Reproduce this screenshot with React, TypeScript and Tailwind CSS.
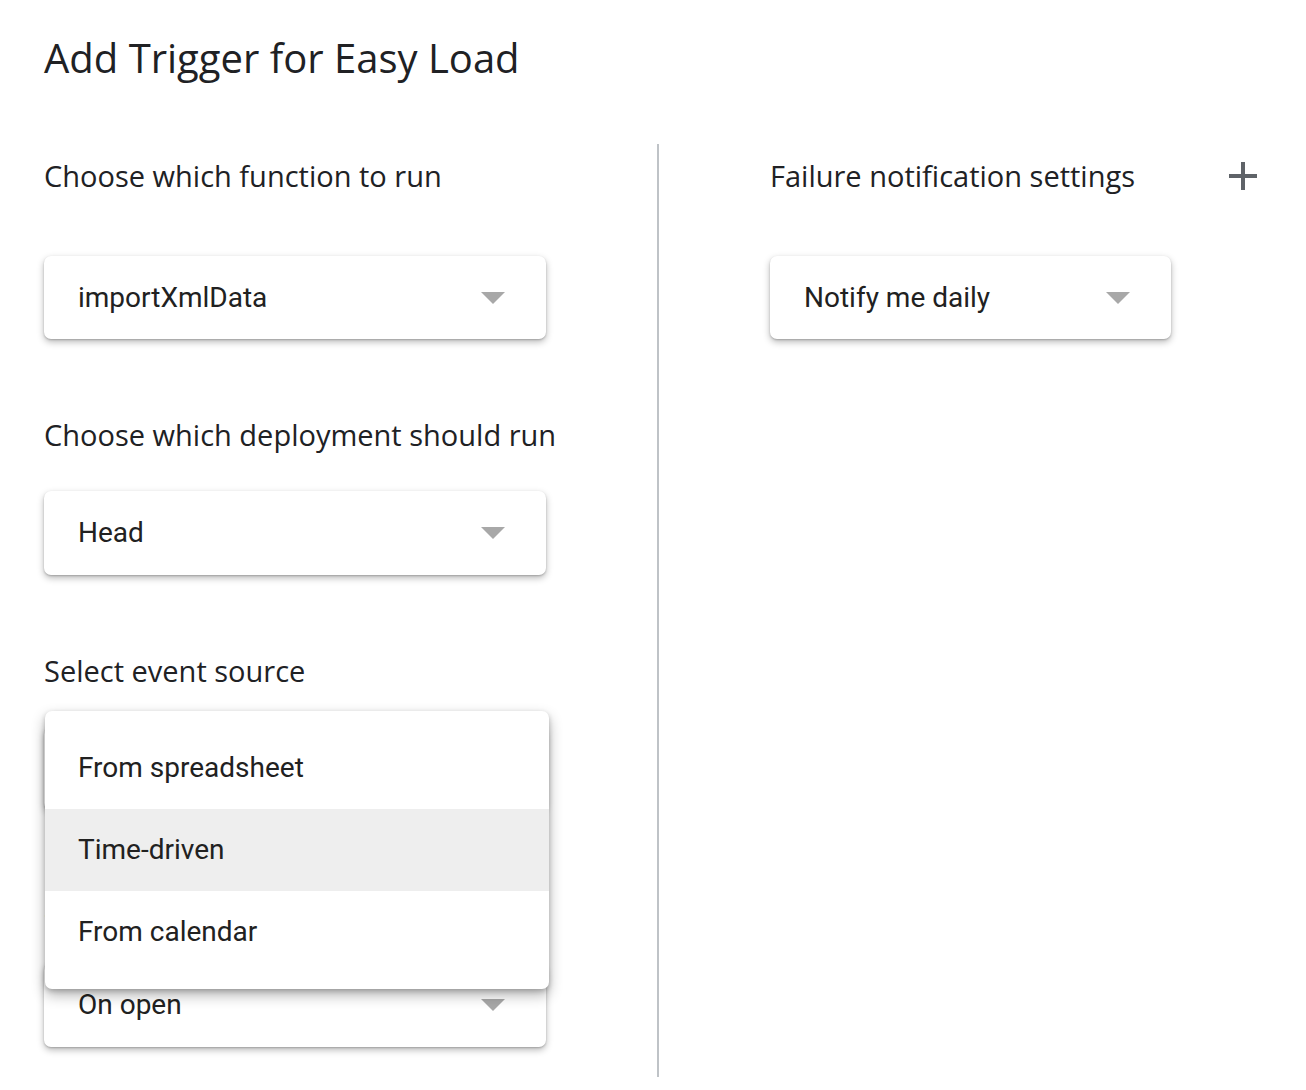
import React from "react";

const labelFont = { fontFamily: '"Open Sans", "Noto Sans", sans-serif' };
const selFont = { fontFamily: 'Roboto, "Liberation Sans", sans-serif' };

function Arrow() {
  return (
    <svg width="24" height="12" viewBox="0 0 24 12" className="shrink-0">
      <path d="M0 0 L24 0 L12 12 Z" fill="#a8a8a8" />
    </svg>
  );
}

function Select({ text, h = 83, w = 502 }: { text: string; h?: number; w?: number }) {
  return (
    <div
      className="bg-white rounded-[7px] flex items-center pl-[34px] pr-[41px] justify-between shadow-[0_3px_7px_rgba(0,0,0,0.28),0_1px_2px_rgba(0,0,0,0.2)]"
      style={{ height: h, width: w }}
    >
      <span className="text-[28px] text-[#212121] leading-none" style={selFont}>
        {text}
      </span>
      <Arrow />
    </div>
  );
}

function Label({ text }: { text: string }) {
  return (
    <div className="text-[29px] leading-[32px] text-[#202124] whitespace-nowrap" style={labelFont}>
      {text}
    </div>
  );
}

export default function App() {
  return (
    <div className="w-[1306px] h-[1090px] bg-white relative overflow-hidden">
      <h1
        className="pl-[44px] pt-[38px] text-[40px] leading-[40px] text-[#202124] font-medium whitespace-nowrap"
        style={labelFont}
      >
        Add Trigger for Easy Load
      </h1>
      <div className="flex mt-[66px]">
        <div className="w-[657px] shrink-0 pl-[44px] pt-[16px] pb-[30px]">
          <Label text="Choose which function to run" />
          <div className="mt-[64px]">
            <Select text="importXmlData" />
          </div>
          <div className="mt-[80px]">
            <Label text="Choose which deployment should run" />
          </div>
          <div className="mt-[40px]">
            <Select text="Head" h={84} />
          </div>
          <div className="mt-[80px]">
            <Label text="Select event source" />
          </div>
          <div className="mt-[40px]">
            <Select text="From spreadsheet" />
          </div>
          <div className="mt-[81px]">
            <Label text="Select event type" />
          </div>
          <div className="mt-[40px]">
            <Select text="On open" h={84} />
          </div>
        </div>
        <div className="w-[2px] shrink-0 bg-[#bfc3c7]" />
        <div className="flex-1 pl-[111px] pt-[16px]">
          <div className="flex items-center justify-between pr-[49px]">
            <Label text="Failure notification settings" />
            <svg width="28" height="28" viewBox="0 0 28 28">
              <rect x="12" y="0" width="4" height="28" fill="#5f6368" />
              <rect x="0" y="12" width="28" height="4" fill="#5f6368" />
            </svg>
          </div>
          <div className="mt-[64px]">
            <Select text="Notify me daily" w={401} />
          </div>
        </div>
      </div>

      <div className="absolute left-[45px] top-[711px] w-[504px] bg-white rounded-[7px] py-[16px] shadow-[0_6px_14px_rgba(0,0,0,0.3),0_2px_5px_rgba(0,0,0,0.2)]">
        {["From spreadsheet", "Time-driven", "From calendar"].map((t, i) => (
          <div
            key={t}
            className={`h-[82px] flex items-center pl-[33px] text-[28px] text-[#212121] ${i === 1 ? "bg-[#eeeeee]" : ""}`}
            style={selFont}
          >
            {t}
          </div>
        ))}
      </div>
    </div>
  );
}
